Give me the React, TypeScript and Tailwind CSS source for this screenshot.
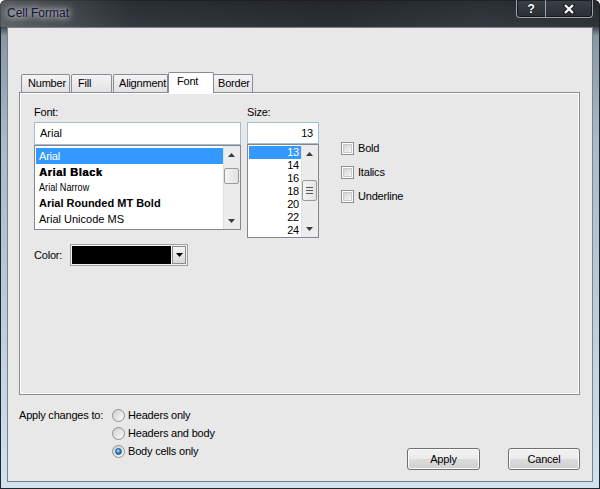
import React from "react";

const ui = "font-['Liberation_Sans',Arial,sans-serif] text-[11px] tracking-[-0.2px] text-black";

const tabs = [
  { label: "Number", cls: "ml-[2px] w-[49px] pl-[6px]" },
  { label: "Fill", cls: "ml-[1px] w-[41px] pl-[6px]" },
  { label: "Alignment", cls: "ml-[1px] w-[55px] pl-[5px]" },
  { label: "Font", cls: "w-[46px] pl-[8px]", active: true },
  { label: "Border", cls: "-ml-px w-[40px] pl-[4px]" },
];

const fontRows = [
  { name: "Arial", cls: "h-[16px]", selected: true },
  { name: "Arial Black", cls: "h-[16px] font-bold tracking-[0.6px] [text-shadow:0.4px_0_0_#000]" },
  { name: "Arial Narrow", cls: "h-[15px]", narrow: true },
  { name: "Arial Rounded MT Bold", cls: "h-[16px] font-bold tracking-normal" },
  { name: "Arial Unicode MS", cls: "h-[17px] tracking-normal" },
];

const sizes = ["13", "14", "16", "18", "20", "22", "24"];

const Arrow = ({ up }: { up?: boolean }) => (
  <svg width="7" height="4" viewBox="0 0 7 4">
    <polygon points={up ? "3.5,0 7,4 0,4" : "0,0 7,0 3.5,4"} fill="#3c3c3c" />
  </svg>
);

const Checkbox = ({ label }: { label: string }) => (
  <div className="flex h-[13px] items-center gap-[4px]">
    <div className="h-[13px] w-[13px] border border-[#8e8f8f] bg-white p-[1px]">
      <div className="h-full w-full border border-[#c9c9c9] bg-[linear-gradient(135deg,#d2d2d2,#f7f7f7)]" />
    </div>
    <span>{label}</span>
  </div>
);

const Radio = ({ label, checked }: { label: string; checked?: boolean }) => (
  <div className="flex h-[18px] items-center gap-[3px]">
    <div className="flex h-[13px] w-[13px] items-center justify-center rounded-full border border-[#8e8f8f] bg-[linear-gradient(135deg,#cfcfcf,#fbfbfb)]">
      {checked && (
        <div className="h-[7px] w-[7px] rounded-full border border-[#1c4f82] bg-[radial-gradient(circle_at_40%_35%,#b8e0fb_0%,#3a8fd6_45%,#10457e_100%)]" />
      )}
    </div>
    <span>{label}</span>
  </div>
);

const Button = ({ label, w }: { label: string; w: string }) => (
  <button
    className={`${w} h-[22px] rounded-[3px] border border-[#707070] bg-[linear-gradient(#f2f2f2_0%,#ebebeb_49%,#dddddd_50%,#cfcfcf_100%)] shadow-[inset_0_0_0_1px_#fcfcfc] text-[11px] leading-[20px]`}
  >
    {label}
  </button>
);

export default function App() {
  return (
    <div
      className={`${ui} flex h-[489px] w-[600px] flex-col overflow-hidden rounded-t-[6px] bg-[linear-gradient(180deg,#2e3338_0px,#3a4047_26px,#8a97a3_36px,#a8bacb_140px,#bccddc_320px,#d3e2ef_489px)] shadow-[inset_0_0_0_1px_#22272c]`}
    >
      {/* caption bar */}
      <div className="flex h-[27px] items-start justify-between bg-[linear-gradient(90deg,rgba(255,255,255,0.18)_0%,rgba(0,0,0,0.12)_22%,rgba(0,0,0,0.25)_55%,rgba(0,0,0,0.1)_80%,rgba(0,0,0,0.2)_100%)]">
        <span className="pl-[7px] pt-[6px] text-[12px] leading-[14px] tracking-normal text-[#14143a] [text-shadow:0_0_6px_#fff,0_0_10px_rgba(255,255,255,0.8)]">
          Cell Format
        </span>
        <div className="mr-[7px] flex h-[18px] rounded-b-[4px] border border-t-0 border-[#9aa2aa] bg-[linear-gradient(#3b4148,#2a2f35)] shadow-[inset_0_0_0_1px_rgba(0,0,0,0.5)]">
          <div className="flex w-[29px] items-center justify-center border-r border-[#9aa2aa] text-[12px] font-bold text-white [text-shadow:0_0_2px_#000]">
            ?
          </div>
          <div className="flex w-[46px] items-center justify-center">
            <svg width="12" height="10" viewBox="0 0 12 10">
              <path d="M2 1 L10 9 M10 1 L2 9" stroke="#1a1d21" strokeWidth="4" strokeLinecap="round" />
              <path d="M2 1 L10 9 M10 1 L2 9" stroke="#fff" strokeWidth="2.2" />
            </svg>
          </div>
        </div>
      </div>

      {/* client area */}
      <div className="mx-[7px] mb-[7px] flex flex-1 flex-col border border-[#76818c] bg-[#e8e8e8]">
        <div className="ml-[11px] mt-[44px] flex h-[20px] items-end">
          {tabs.map((t) =>
            t.active ? (
              <div
                key={t.label}
                className={`${t.cls} relative z-10 -mb-px h-[21px] rounded-t-[2px] border border-b-0 border-[#898c95] bg-white pt-[1px] leading-[14px]`}
              >
                {t.label}
              </div>
            ) : (
              <div
                key={t.label}
                className={`${t.cls} flex h-[18px] items-center whitespace-nowrap rounded-t-[2px] border border-b-0 border-[#898c95] bg-[linear-gradient(#f4f4f4,#e2e2e2)]`}
              >
                {t.label}
              </div>
            )
          )}
        </div>

        <div className="ml-[11px] mr-[12px] h-[303px] border border-[#898c95] pl-[14px] pt-[12px] shadow-[inset_0_0_0_1px_#fff]">
          <div className="flex items-start">
            {/* font name */}
            <div className="flex w-[207px] flex-col">
              <div className="h-[14px] leading-[14px]">Font:</div>
              <div className="mt-[3px] h-[23px] border border-[#a3bcd6] bg-white pl-[5px] leading-[21px] tracking-normal">Arial</div>
              <div className="flex h-[85px] border border-[#828790] bg-white">
                <div className="flex-1 pl-px pt-[2px]">
                  {fontRows.map((r) => (
                    <div
                      key={r.name}
                      className={`${r.cls} flex items-center pl-[3px] ${r.selected ? "bg-[#3399ff] text-white" : ""}`}
                    >
                      {r.narrow ? (
                        <span className="inline-block origin-left scale-x-[0.83] whitespace-nowrap tracking-normal">{r.name}</span>
                      ) : (
                        r.name
                      )}
                    </div>
                  ))}
                </div>
                <div className="flex w-[17px] flex-col items-center bg-[#ececec] shadow-[inset_1px_0_0_#e0e0e0]">
                  <div className="flex h-[17px] items-center justify-center">
                    <Arrow up />
                  </div>
                  <div className="mt-[5px] h-[16px] w-[15px] rounded-[2px] border border-[#9a9a9a] bg-[linear-gradient(90deg,#f4f4f4,#e2e2e2)]" />
                  <div className="flex-1" />
                  <div className="flex h-[17px] items-center justify-center">
                    <Arrow />
                  </div>
                </div>
              </div>
            </div>

            {/* font size */}
            <div className="ml-[6px] flex w-[72px] flex-col">
              <div className="h-[14px] leading-[14px]">Size:</div>
              <div className="mt-[3px] h-[22px] border border-[#a3bcd6] bg-white pr-[5px] text-right leading-[20px]">13</div>
              <div className="flex h-[94px] border border-[#828790] bg-white">
                <div className="flex-1 pl-px pt-px">
                  {sizes.map((s, i) => (
                    <div
                      key={s}
                      className={`flex h-[13px] items-center justify-end pr-[2px] ${i === 0 ? "bg-[#3399ff] text-white" : ""}`}
                    >
                      {s}
                    </div>
                  ))}
                </div>
                <div className="flex w-[17px] flex-col items-center bg-[#ececec] shadow-[inset_1px_0_0_#e0e0e0]">
                  <div className="flex h-[17px] items-center justify-center">
                    <Arrow up />
                  </div>
                  <div className="mt-[18px] flex h-[21px] w-[15px] flex-col items-center justify-center gap-[2px] rounded-[2px] border border-[#9a9a9a] bg-[linear-gradient(90deg,#f4f4f4,#e2e2e2)]">
                    <div className="h-px w-[7px] bg-[#555]" />
                    <div className="h-px w-[7px] bg-[#555]" />
                    <div className="h-px w-[7px] bg-[#555]" />
                  </div>
                  <div className="flex-1" />
                  <div className="flex h-[17px] items-center justify-center">
                    <Arrow />
                  </div>
                </div>
              </div>
            </div>

            {/* style options */}
            <div className="ml-[22px] flex flex-col gap-[11px] pt-[37px]">
              <Checkbox label="Bold" />
              <Checkbox label="Italics" />
              <Checkbox label="Underline" />
            </div>
          </div>

          <div className="mt-[6px] flex items-center">
            <div className="w-[36px]">Color:</div>
            <div className="flex h-[22px] w-[118px] border border-[#a0a0a0] bg-[#f2f2f2] p-px">
              <div className="flex-1 bg-black" />
              <div className="ml-px flex w-[14px] items-center justify-center border border-[#8c8c8c] bg-[linear-gradient(#f4f4f4,#d9d9d9)]">
                <svg width="7" height="4" viewBox="0 0 7 4">
                  <polygon points="0,0 7,0 3.5,4" fill="#000" />
                </svg>
              </div>
            </div>
          </div>
        </div>

        <div className="ml-[11px] mr-[12px] mt-[11px] flex items-start justify-between">
          <div className="flex">
            <div className="h-[18px] w-[93px] leading-[18px]">Apply changes to:</div>
            <div className="flex flex-col">
              <Radio label="Headers only" />
              <Radio label="Headers and body" />
              <Radio label="Body cells only" checked />
            </div>
          </div>
          <div className="mt-[42px] flex gap-[28px]">
            <Button label="Apply" w="w-[73px]" />
            <Button label="Cancel" w="w-[72px]" />
          </div>
        </div>
      </div>
    </div>
  );
}
